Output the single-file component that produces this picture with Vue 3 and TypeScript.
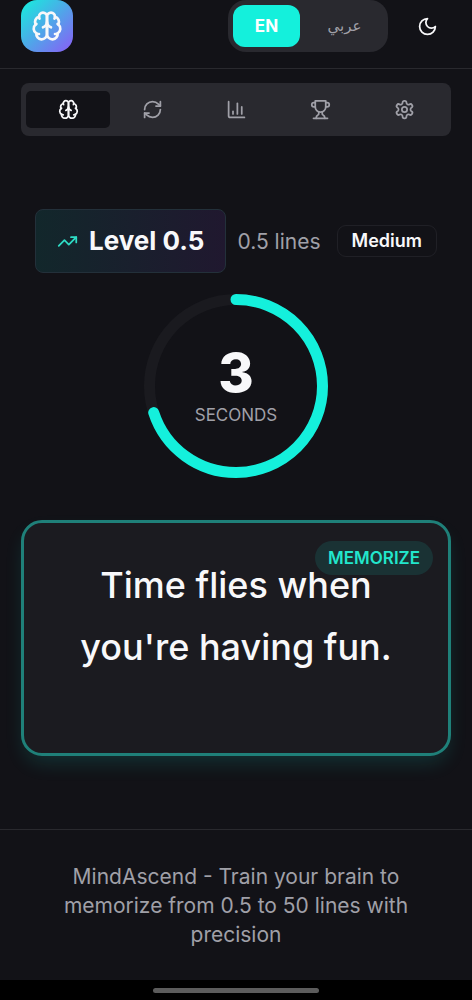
<script setup lang="ts">
import { computed, ref } from 'vue'

interface Tab {
  id: string
  label: string
  paths: string[]
}

const brain: string[] = [
  'M12 5a3 3 0 1 0-5.997.125 4 4 0 0 0-2.526 5.77 4 4 0 0 0 .556 6.588A4 4 0 1 0 12 18Z',
  'M12 5a3 3 0 1 1 5.997.125 4 4 0 0 1 2.526 5.77 4 4 0 0 1-.556 6.588A4 4 0 1 1 12 18Z',
  'M15 13a4.5 4.5 0 0 1-3-4 4.5 4.5 0 0 1-3 4',
  'M17.599 6.5a3 3 0 0 0 .399-1.375',
  'M6.003 5.125A3 3 0 0 0 6.401 6.5',
  'M3.477 10.896a4 4 0 0 1 .585-.396',
  'M19.938 10.5a4 4 0 0 1 .585.396',
  'M6 18a4 4 0 0 1-1.967-.516',
  'M19.967 17.484A4 4 0 0 1 18 18',
]

const tabs: Tab[] = [
  { id: 'train', label: 'Train', paths: brain },
  {
    id: 'review',
    label: 'Review',
    paths: [
      'M3 12a9 9 0 0 1 9-9 9.75 9.75 0 0 1 6.74 2.74L21 8',
      'M21 3v5h-5',
      'M21 12a9 9 0 0 1-9 9 9.75 9.75 0 0 1-6.74-2.74L3 16',
      'M8 16H3v5',
    ],
  },
  { id: 'stats', label: 'Statistics', paths: ['M3 3v16a2 2 0 0 0 2 2h16', 'M18 17V9', 'M13 17V5', 'M8 17v-3'] },
  {
    id: 'awards',
    label: 'Achievements',
    paths: [
      'M6 9H4.5a2.5 2.5 0 0 1 0-5H6',
      'M18 9h1.5a2.5 2.5 0 0 0 0-5H18',
      'M4 22h16',
      'M10 14.66V17c0 .55-.47.98-.97 1.21C7.85 18.75 7 20.24 7 22',
      'M14 14.66V17c0 .55.47.98.97 1.21C16.15 18.75 17 20.24 17 22',
      'M18 2H6v7a6 6 0 0 0 12 0V2Z',
    ],
  },
  {
    id: 'settings',
    label: 'Settings',
    paths: [
      'M12.22 2h-.44a2 2 0 0 0-2 2v.18a2 2 0 0 1-1 1.73l-.43.25a2 2 0 0 1-2 0l-.15-.08a2 2 0 0 0-2.73.73l-.22.38a2 2 0 0 0 .73 2.73l.15.1a2 2 0 0 1 1 1.72v.51a2 2 0 0 1-1 1.74l-.15.09a2 2 0 0 0-.73 2.73l.22.38a2 2 0 0 0 2.73.73l.15-.08a2 2 0 0 1 2 0l.43.25a2 2 0 0 1 1 1.73V20a2 2 0 0 0 2 2h.44a2 2 0 0 0 2-2v-.18a2 2 0 0 1 1-1.73l.43-.25a2 2 0 0 1 2 0l.15.08a2 2 0 0 0 2.73-.73l.22-.39a2 2 0 0 0-.73-2.73l-.15-.08a2 2 0 0 1-1-1.74v-.5a2 2 0 0 1 1-1.74l.15-.09a2 2 0 0 0 .73-2.73l-.22-.38a2 2 0 0 0-2.73-.73l-.15.08a2 2 0 0 1-2 0l-.43-.25a2 2 0 0 1-1-1.73V4a2 2 0 0 0-2-2z',
      'M15 12a3 3 0 1 1-6 0 3 3 0 0 1 6 0Z',
    ],
  },
]

const activeTab = ref('train')
const language = ref<'en' | 'ar'>('en')

const total = 10
const elapsed = ref(7)
const remaining = computed(() => total - elapsed.value)
const dash = computed(() => `${(elapsed.value / total) * 100} 100`)
</script>

<template>
  <div class="page">
    <header class="header">
      <div class="logo">
        <svg class="icon icon-logo" viewBox="0 0 24 24" aria-hidden="true">
          <path v-for="d in brain" :key="d" :d="d" />
        </svg>
      </div>
      <div class="actions">
        <div class="languages">
          <button type="button" class="language" :class="{ active: language === 'en' }" @click="language = 'en'">EN</button>
          <button type="button" class="language" lang="ar" :class="{ active: language === 'ar' }" @click="language = 'ar'">عربي</button>
        </div>
        <button type="button" class="theme" aria-label="Toggle theme">
          <svg class="icon" viewBox="0 0 24 24" aria-hidden="true"><path d="M12 3a6 6 0 0 0 9 9 9 9 0 1 1-9-9Z" /></svg>
        </button>
      </div>
    </header>

    <nav class="tabs">
      <button
        v-for="tab in tabs"
        :key="tab.id"
        type="button"
        class="tab"
        :class="{ active: activeTab === tab.id }"
        :aria-label="tab.label"
        @click="activeTab = tab.id"
      >
        <svg class="icon" viewBox="0 0 24 24" aria-hidden="true">
          <path v-for="d in tab.paths" :key="d" :d="d" />
        </svg>
      </button>
    </nav>

    <main class="main">
      <div class="status">
        <div class="level">
          <svg class="icon" viewBox="0 0 24 24" aria-hidden="true">
            <path d="M22 7l-8.500 8.500-5-5L2 17" />
            <path d="M16 7h6v6" />
          </svg>
          <span>Level 0.5</span>
        </div>
        <div class="details">
          <span class="lines">0.5 lines</span>
          <span class="difficulty">Medium</span>
        </div>
      </div>

      <div class="timer">
        <svg class="ring" viewBox="0 0 184 184" aria-hidden="true">
          <circle class="track" cx="92" cy="92" r="86.500" />
          <circle class="progress" cx="92" cy="92" r="86.500" pathLength="100" :stroke-dasharray="dash" transform="rotate(-90 92 92)" />
        </svg>
        <div class="count">
          <span class="number">{{ remaining }}</span>
          <span class="unit">SECONDS</span>
        </div>
      </div>

      <section class="card">
        <p class="phrase">Time flies when you're having fun.</p>
        <span class="badge">MEMORIZE</span>
      </section>
    </main>

    <footer class="footer">
      <p>MindAscend - Train your brain to memorize from 0.5 to 50 lines with precision</p>
    </footer>
    <div class="system-bar"><span class="handle"></span></div>
  </div>
</template>

<style>
body {
  margin: 0;
  background: #121217;
}
</style>

<style scoped>
.page {
  box-sizing: border-box;
  min-height: 100vh;
  display: flex;
  flex-direction: column;
  background: #121217;
  color: #f8f8fa;
  font-family: Inter, "Noto Sans", sans-serif;
}

button {
  margin: 0;
  padding: 0;
  border: 0;
  background: none;
  color: inherit;
  font: inherit;
  cursor: pointer;
}

.icon {
  display: block;
  flex: none;
  width: 21px;
  height: 21px;
  fill: none;
  stroke: currentColor;
  stroke-width: 2;
  stroke-linecap: round;
  stroke-linejoin: round;
}

.header {
  display: flex;
  justify-content: space-between;
  padding: 0 21px 16px;
  border-bottom: 1px solid #29292e;
}

.logo {
  display: grid;
  place-items: center;
  width: 52px;
  height: 52px;
  border-radius: 16px;
  background: linear-gradient(135deg, #14f0dc, #8b5cf6);
}

.icon-logo {
  width: 32px;
  height: 32px;
}

.actions {
  display: flex;
  gap: 16px;
}

.languages {
  box-sizing: border-box;
  display: flex;
  height: 52px;
  padding: 5px;
  border-radius: 18px;
  background: #29292f;
}

.language {
  width: 67px;
  border-radius: 12px;
  color: #a0a0a8;
  font-size: 17px;
  font-weight: 500;
}

.language[lang="ar"] {
  width: 83px;
  padding-left: 6px;
  font-family: "DejaVu Sans", sans-serif;
  font-size: 15px;
}

.language.active {
  background: #14f0dc;
  color: #fff;
  font-weight: 700;
}

.theme {
  display: grid;
  place-items: center;
  width: 47px;
}

.tabs {
  display: flex;
  margin: 14px 21px 0;
  padding: 8px 5px;
  border-radius: 8px;
  background: #29292f;
}

.tab {
  flex: 1;
  display: grid;
  place-items: center;
  height: 37px;
  border-radius: 5px;
  color: #a0a0a8;
}

.tab.active {
  background: #121217;
  color: #f8f8fa;
}

.main {
  flex: 1;
  display: flex;
  flex-direction: column;
  align-items: center;
  padding: 73px 21px;
}

.status {
  display: flex;
  align-items: center;
  gap: 11px;
}

.level {
  display: flex;
  align-items: center;
  gap: 11px;
  padding: 15px 21px;
  border: 1px solid #23303a;
  border-radius: 8px;
  background: linear-gradient(90deg, #12272b, #20182f);
  font-size: 26px;
  line-height: 32px;
  font-weight: 700;
}

.level .icon {
  color: #2edcc5;
}

.details {
  display: flex;
  align-items: center;
  gap: 16px;
}

.lines {
  color: #a0a0a8;
  font-size: 21px;
}

.difficulty {
  padding: 3px 14px;
  border: 1px solid #202026;
  border-radius: 9px;
  font-size: 18px;
  line-height: 24px;
  font-weight: 600;
}

.timer {
  display: grid;
  place-items: center;
  margin: 21px 0 42px;
}

.ring,
.count {
  grid-area: 1 / 1;
}

.ring {
  display: block;
  width: 184px;
  height: 184px;
  fill: none;
  stroke-width: 11;
}

.track {
  stroke: #1a1a1f;
}

.progress {
  stroke: #14f0dc;
  stroke-linecap: round;
}

.count {
  display: flex;
  flex-direction: column;
  align-items: center;
}

.number {
  font-size: 54px;
  line-height: 58px;
  font-weight: 800;
}

.unit {
  color: #a0a0a8;
  font-size: 17px;
  line-height: 26px;
}

.card {
  position: relative;
  box-sizing: border-box;
  align-self: stretch;
  min-height: 236px;
  padding: 31px 39px;
  border: 3px solid #1f8079;
  border-radius: 21px;
  background: #1b1b20;
  box-shadow: 0 10px 20px -4px rgba(20, 240, 220, 0.15);
}

.phrase {
  margin: 0;
  font-size: 36px;
  line-height: 62px;
  font-weight: 500;
  text-align: center;
}

.badge {
  position: absolute;
  top: 18px;
  right: 15px;
  padding: 4px 13px;
  border-radius: 17px;
  background: rgba(20, 240, 220, 0.11);
  color: #22e6cc;
  font-size: 17px;
  line-height: 26px;
  font-weight: 600;
}

.footer {
  padding: 32px 42px 31px;
  border-top: 1px solid #29292e;
  color: #a0a0a8;
  font-size: 21px;
  line-height: 29px;
  text-align: center;
}

.footer p {
  margin: 0;
}

.system-bar {
  display: grid;
  place-items: center;
  height: 20px;
  background: #000;
}

.handle {
  width: 35%;
  height: 5px;
  border-radius: 3px;
  background: #5c5c5c;
}
</style>
